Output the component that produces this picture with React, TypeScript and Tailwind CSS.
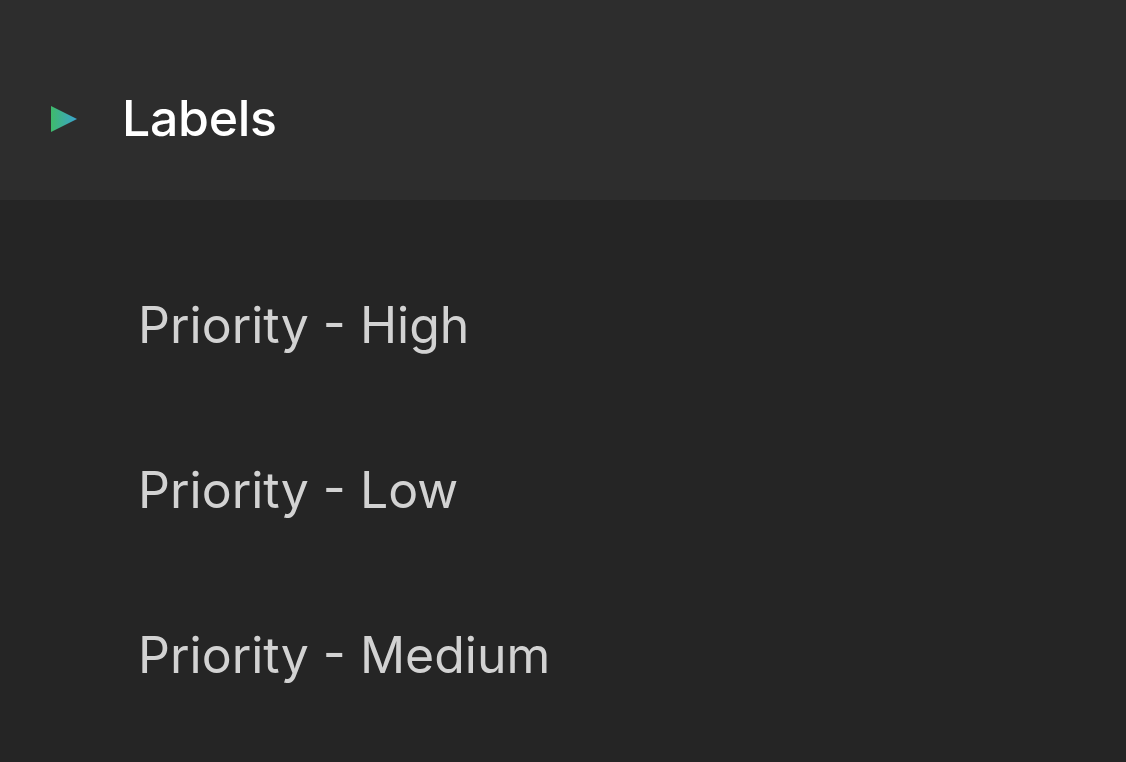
import React from "react";

export default function App() {
  const items = ["Priority - High", "Priority - Low", "Priority - Medium"];
  return (
    <div
      className="w-[1126px] h-[762px] bg-[#252525] overflow-hidden"
      style={{ fontFamily: "Inter, 'Noto Sans', sans-serif" }}
    >
      <div className="h-[200px] bg-[#2d2d2d] flex items-start pt-[93px] pl-[50px]">
        <svg width="28" height="28" viewBox="0 0 28 28" className="mt-[12px] shrink-0">
          <defs>
            <linearGradient id="tri" x1="0" y1="0" x2="1" y2="0">
              <stop offset="0" stopColor="#3fba6a" />
              <stop offset="1" stopColor="#3aa3d0" />
            </linearGradient>
          </defs>
          <polygon points="1,1 27,14 1,27" fill="url(#tri)" />
        </svg>
        <span className="ml-[44px] text-[50px] text-white font-medium tracking-[-0.3px] leading-none">
          Labels
        </span>
      </div>
      <div className="flex flex-col pl-[138px] pt-[98px] gap-[110px]">
        {items.map((t) => (
          <div key={t} className="text-[50px] text-[#d2d2d2] leading-[55px]">
            {t}
          </div>
        ))}
      </div>
    </div>
  );
}
